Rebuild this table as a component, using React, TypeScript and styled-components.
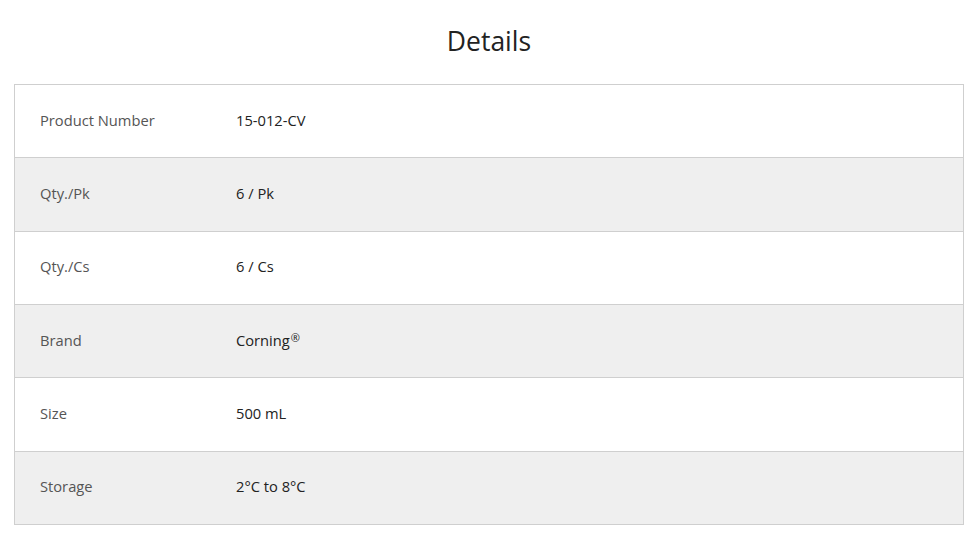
import React from "react";
import styled, { createGlobalStyle } from "styled-components";

const Global = createGlobalStyle`
  html, body { margin: 0; padding: 0; background: #fff; }
  body { font-family: "Open Sans", "Noto Sans", sans-serif; }
`;

const Page = styled.div`
  padding: 0 16px 0 14px;
`;

const Title = styled.h2`
  margin: 0;
  height: 84px;
  display: flex;
  align-items: center;
  justify-content: center;
  font-size: 26.5px;
  font-weight: 400;
  color: #222;
  padding-bottom: 2px;
  box-sizing: border-box;
`;

const Table = styled.div`
  border: 1px solid #cfcfcf;
  border-bottom: none;
`;

const Row = styled.div<{ $shaded: boolean }>`
  display: grid;
  grid-template-columns: 196px 1fr;
  height: 73.33px;
  box-sizing: border-box;
  border-bottom: 1px solid #cfcfcf;
  align-items: center;
  padding-bottom: 3px;
  background: ${(p) => (p.$shaded ? "#efefef" : "#fff")};
  font-size: 14.7px;
`;

const Label = styled.div`
  padding-left: 25px;
  color: #555;
`;

const Value = styled.div`
  padding-left: 25px;
  color: #222;
`;

const Reg = styled.sup`
  font-size: 0.75em;
  vertical-align: 0.3em;
  line-height: 0;
  margin-left: 1px;
`;

const rows: [string, React.ReactNode][] = [
  ["Product Number", "15-012-CV"],
  ["Qty./Pk", "6 / Pk"],
  ["Qty./Cs", "6 / Cs"],
  ["Brand", <>Corning<Reg>®</Reg></>],
  ["Size", "500 mL"],
  ["Storage", "2°C to 8°C"],
];

export default function App() {
  return (
    <Page>
      <Global />
      <Title>Details</Title>
      <Table>
        {rows.map(([k, v], i) => (
          <Row key={k} $shaded={i % 2 === 1}>
            <Label>{k}</Label>
            <Value>{v}</Value>
          </Row>
        ))}
      </Table>
    </Page>
  );
}
